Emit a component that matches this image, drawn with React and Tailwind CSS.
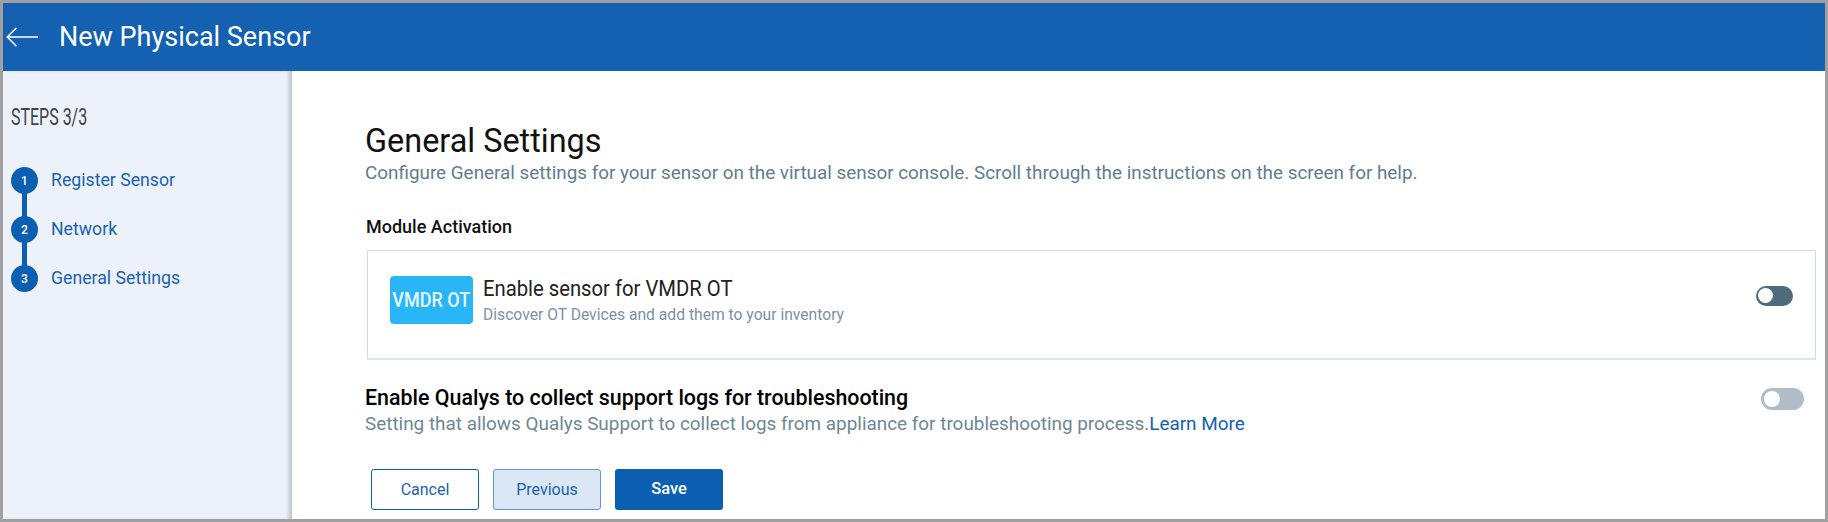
import React from 'react';

const steps = [
  { id: 1, label: 'Register Sensor' },
  { id: 2, label: 'Network' },
  { id: 3, label: 'General Settings' },
];

function Toggle({ className, knobClassName }) {
  return (
    <div className={`flex items-center rounded-full ${className}`}>
      <div className={`rounded-full bg-white ${knobClassName}`}></div>
    </div>
  );
}

function StepList() {
  return (
    <div className="relative mt-[37px] flex flex-col">
      <div className="absolute left-0 top-[20px] ml-[11px] h-[90px] w-[5px] bg-[#0b5fb3]"></div>
      {steps.map((step) => (
        <div key={step.id} className="relative mb-[22px] flex h-[27px] items-center last:mb-0">
          <div className="flex h-[27px] w-[27px] items-center justify-center rounded-full bg-[#0b5fb3] text-[12px] font-medium text-white">
            {step.id}
          </div>
          <span className="ml-[13px] text-[17.7px] text-[#1a62b0]">{step.label}</span>
        </div>
      ))}
    </div>
  );
}

export default function App() {
  return (
    <div className="flex h-[522px] w-[1828px] flex-col overflow-hidden border-[3px] border-[#a0a0a0] bg-white font-['Roboto',sans-serif]">
      <header className="flex h-[68px] shrink-0 items-center bg-[#1461b1] text-white">
        <svg className="ml-[3px] h-[20px] w-[32px]" viewBox="0 0 32 20" fill="none" stroke="currentColor" strokeWidth="1.5">
          <path d="M32 10H1.5M10.5 .8 1.2 10l9.3 9.2" />
        </svg>
        <h1 className="ml-[21px] text-[27px] leading-none">New Physical Sensor</h1>
      </header>

      <div className="flex min-h-0 flex-1">
        <aside className="w-[289px] shrink-0 bg-[#edf2fa] pl-[8px] pt-[33px] shadow-[inset_-5px_0_4px_-2px_#b9c1ca]">
          <div className="h-[26px] origin-left scale-x-[0.68] text-[23.5px] leading-[26px] whitespace-nowrap text-[#3f4448]">STEPS 3/3</div>
          <StepList />
        </aside>

        <main className="min-w-0 flex-1 pl-[73px] pr-[9px] pt-[53px]">
          <h2 className="text-[32.4px] leading-[34px] text-[#111]">General Settings</h2>
          <p className="mt-[5px] text-[18.87px] leading-[20px] whitespace-nowrap text-[#5f7d8f]">
            Configure General settings for your sensor on the virtual sensor console. Scroll through the instructions on the screen for help.
          </p>

          <h3 className="ml-[1px] mt-[34px] text-[18px] leading-[20px] font-medium text-[#111]">Module Activation</h3>

          <section className="ml-[2px] mt-[13px] flex h-[110px] items-center border border-[#cfdbe3] border-b-2 border-b-[#dfe6ea] pb-[9px] pl-[22px] pr-[22px]">
            <div className="flex h-[48px] w-[83px] items-center justify-center rounded-[4px] bg-[#29b6f6] text-[20px] font-medium whitespace-nowrap text-[#e8f7ff]">
              <span className="scale-x-[0.9]">VMDR OT</span>
            </div>
            <div className="ml-[10px] flex-1">
              <div className="origin-left scale-x-[0.92] text-[22px] leading-[26px] whitespace-nowrap text-[#222]">Enable sensor for VMDR OT</div>
              <div className="mt-[4px] text-[15.66px] leading-[18px] text-[#7b929f]">Discover OT Devices and add them to your inventory</div>
            </div>
            <Toggle className="mb-[9px] h-[20px] w-[37px] bg-[#4f6a7a] pl-[2px]" knobClassName="h-[15px] w-[15px]" />
          </section>

          <div className="mt-[26px] flex items-start justify-between">
            <div>
              <h3 className="text-[21.4px] leading-[24px] font-medium whitespace-nowrap text-black">Enable Qualys to collect support logs for troubleshooting</h3>
              <p className="mt-[2px] text-[18.9px] leading-[24px] whitespace-nowrap text-[#6d8796]">
                Setting that allows Qualys Support to collect logs from appliance for troubleshooting process.
                <a className="text-[#1461b1]">Learn More</a>
              </p>
            </div>
            <Toggle className="mr-[12px] mt-[2px] h-[22px] w-[43px] bg-[#aebdc7] pl-[3px]" knobClassName="h-[16px] w-[16px]" />
          </div>

          <div className="ml-[6px] mt-[33px] flex gap-[14px]">
            <button className="h-[41px] w-[108px] rounded-[3px] border border-[#0b5fb3] bg-white text-[16px] text-[#1a62b0]">Cancel</button>
            <button className="h-[41px] w-[108px] rounded-[3px] border border-[#5f97d0] bg-[#dbe7f4] text-[16px] text-[#1a62b0]">Previous</button>
            <button className="h-[41px] w-[108px] rounded-[3px] bg-[#0b5fb3] text-[16.5px] font-medium text-white">Save</button>
          </div>
        </main>
      </div>
    </div>
  );
}
